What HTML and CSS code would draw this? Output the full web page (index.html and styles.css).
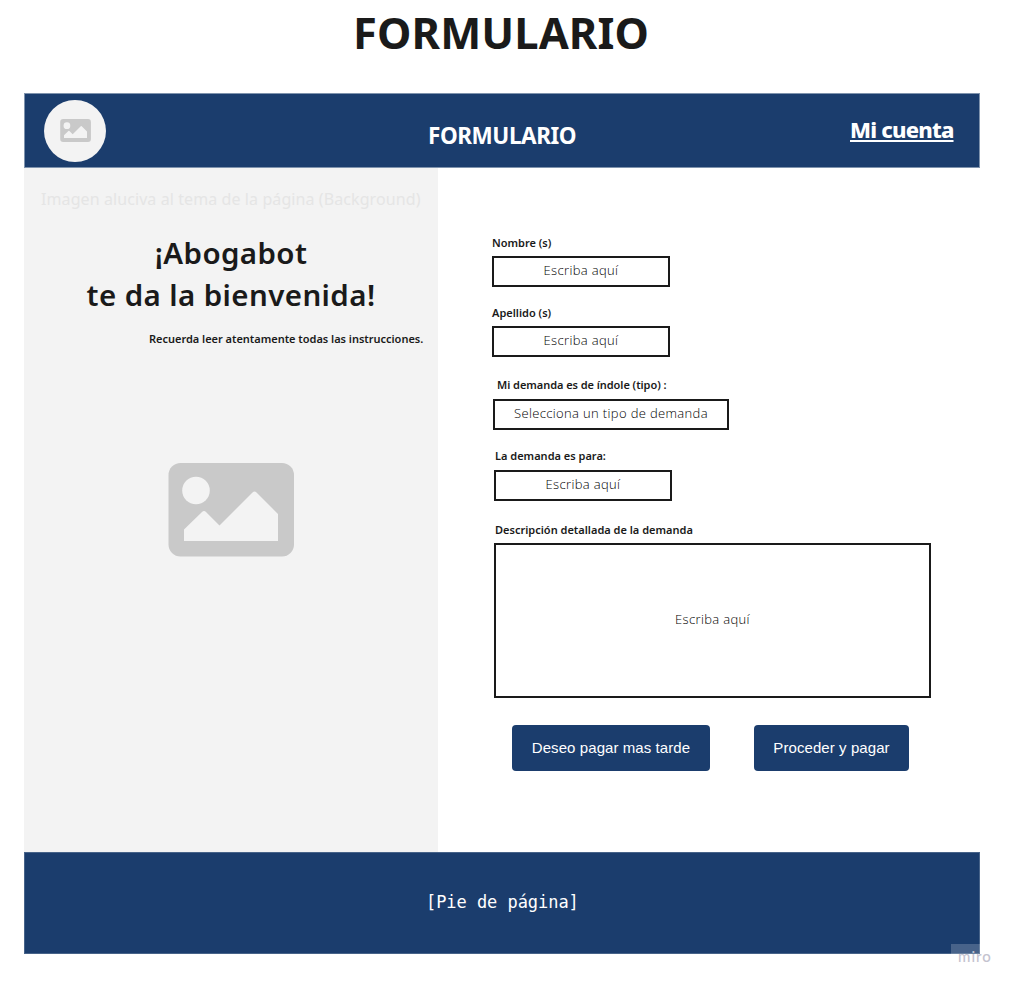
FILE: index.html
```html
<!DOCTYPE html>
<html lang="es">
<head>
<meta charset="utf-8">
<title>Formulario</title>
<link rel="stylesheet" href="styles.css">
</head>
<body>
<svg class="defs" width="0" height="0" aria-hidden="true">
  <symbol id="picture" viewBox="0 0 126 94">
    <rect x=".5" width="125.5" height="93.5" rx="12" fill="#c9c9c9"/>
    <circle cx="28" cy="27.5" r="13.8" fill="#f3f3f3"/>
    <path d="M16 78V66.5L34 49q2-2 4 0L51.5 62.5 84.5 29.5q2-2 4 0L110 51v27z" fill="#f3f3f3"/>
  </symbol>
</svg>
<h1 class="page-title">FORMULARIO</h1>
<div class="frame">
  <header class="header">
    <div class="logo"><svg width="31" height="23"><use href="#picture"/></svg></div>
    <h2 class="header-title">FORMULARIO</h2>
    <a class="account">Mi cuenta</a>
  </header>
  <main class="main">
    <aside class="aside">
      <p class="bg-note">Imagen aluciva al tema de la página (Background)</p>
      <p class="welcome">¡Abogabot<br>te da la bienvenida!</p>
      <p class="reminder">Recuerda leer atentamente todas las instrucciones.</p>
      <svg class="picture" width="126" height="94"><use href="#picture"/></svg>
    </aside>
    <form class="form">
      <label class="label nombre">Nombre (s)</label>
      <div class="input">Escriba aquí</div>
      <label class="label apellido">Apellido (s)</label>
      <div class="input">Escriba aquí</div>
      <label class="label tipo">Mi demanda es de índole (tipo) :</label>
      <div class="input select">Selecciona un tipo de demanda</div>
      <label class="label para">La demanda es para:</label>
      <div class="input recipient">Escriba aquí</div>
      <label class="label detalle">Descripción detallada de la demanda</label>
      <div class="input area">Escriba aquí</div>
      <div class="buttons">
        <div class="button later">Deseo pagar mas tarde</div>
        <div class="button now">Proceder y pagar</div>
      </div>
    </form>
  </main>
  <footer class="footer"><span class="footer-text">[Pie de página]</span><span class="watermark">miro</span></footer>
</div>
</body>
</html>
```
FILE: styles.css
```css
* { box-sizing: border-box; }
body { margin: 0; height: 985px; overflow: hidden; background: #fff; color: #1a1a1a; font-family: "Noto Sans", sans-serif; }
h1, h2, p { margin: 0; }
.defs { display: block; }
.page-title { height: 93px; padding-left: 353px; font-size: 43.5px; line-height: 65px; font-weight: 700; letter-spacing: 0.1px; white-space: nowrap; }
.frame { width: 956px; margin-left: 24px; }
.header { display: grid; grid-template-columns: 403px 422px 1fr; height: 75px; background: #1b3d6d; border: 1px solid #7f93ad; color: #fff; white-space: nowrap; }
.logo { display: flex; align-items: center; justify-content: center; width: 62px; height: 62px; margin: 5.5px 0 0 19px; border-radius: 50%; background: #f3f3f3; }
.header-title { padding-top: 26px; font-size: 22.5px; line-height: 31px; font-weight: 700; letter-spacing: -0.45px; }
.account { padding-top: 20px; font-size: 22px; line-height: 31px; font-weight: 800; letter-spacing: -0.8px; text-decoration: underline; text-decoration-thickness: 2px; text-underline-offset: 2px; text-decoration-skip-ink: none; }
.main { display: grid; grid-template-columns: 414px 1fr; height: 684px; }
.aside { background: #f3f3f3; white-space: nowrap; }
.bg-note { padding: 19px 0 0 17px; font-size: 16px; line-height: 24px; letter-spacing: 0.09px; color: #e5e5e5; }
.welcome { padding-top: 21px; font-size: 29.5px; line-height: 42px; font-weight: 600; letter-spacing: 0.4px; text-align: center; }
.reminder { padding: 14px 0 0 125px; font-size: 11px; line-height: 18px; font-weight: 600; letter-spacing: -0.02px; }
.picture { display: block; margin: 115px 0 0 144px; }
.form { padding: 66px 0 0 54px; white-space: nowrap; }
.label { display: block; height: 22px; font-size: 11px; line-height: 18px; font-weight: 600; }
.apellido { margin-top: 17px; }
.tipo { height: 23px; margin-top: 19px; padding-left: 5px; letter-spacing: -0.05px; }
.para { height: 23px; margin-top: 17px; padding-left: 3px; }
.detalle { margin-top: 20px; padding-left: 3px; }
.input { width: 178px; height: 31px; border: 2px solid #1a1a1a; color: #000; font: 300 13px/25px "Open Sans", sans-serif; letter-spacing: 0.35px; text-align: center; }
.select { width: 236px; margin-left: 1px; }
.recipient { margin-left: 2px; }
.area { width: 437px; height: 155px; margin-left: 2px; line-height: 149px; }
.buttons { display: flex; gap: 44px; padding: 27px 0 0 20px; }
.button { height: 46px; border-radius: 4px; background: #1b3d6d; color: #fff; font: 15px/46px "Liberation Sans", sans-serif; letter-spacing: 0.08px; text-align: center; }
.later { width: 198px; }
.now { width: 155px; }
.footer { position: relative; height: 102px; padding-left: 401px; background: #1b3d6d; border: 1px solid #476389; color: #fff; font: 17px/99px "DejaVu Sans Mono", monospace; letter-spacing: -0.05px; white-space: nowrap; }
.watermark { position: absolute; left: 926px; top: 91px; width: 46px; height: 26px; padding-left: 7px; background: rgba(255,255,255,.2); color: #c4c3cf; font: 500 15px/25px Lato, sans-serif; letter-spacing: 1px; }
```
